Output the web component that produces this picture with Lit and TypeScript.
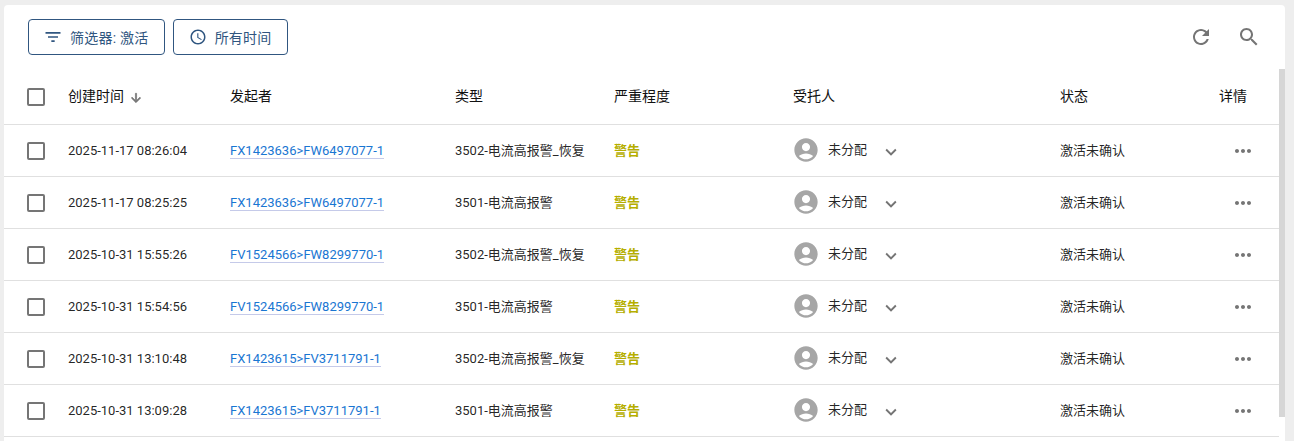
import { LitElement, html, css, svg } from "lit";
import { customElement } from "lit/decorators.js";

const rows = [
  ["2025-11-17 08:26:04", "FX1423636>FW6497077-1", "3502-电流高报警_恢复"],
  ["2025-11-17 08:25:25", "FX1423636>FW6497077-1", "3501-电流高报警"],
  ["2025-10-31 15:55:26", "FV1524566>FW8299770-1", "3502-电流高报警_恢复"],
  ["2025-10-31 15:54:56", "FV1524566>FW8299770-1", "3501-电流高报警"],
  ["2025-10-31 13:10:48", "FX1423615>FV3711791-1", "3502-电流高报警_恢复"],
  ["2025-10-31 13:09:28", "FX1423615>FV3711791-1", "3501-电流高报警"],
];

const icon = (size: number, body: unknown, cls = "") => html`<svg class=${cls} width=${size} height=${size} viewBox="0 0 24 24" fill="currentColor">${body}</svg>`;

@customElement("app-root")
export class AppRoot extends LitElement {
  static styles = css`
    :host { display: block; height: 441px; overflow: hidden; background: #eeeeee; font-family: Roboto, "Noto Sans CJK SC", sans-serif; color: rgba(0,0,0,.87); }
    .page { padding: 5px 9px 0 4px; }
    .card { background: #fff; border-radius: 4px 4px 0 0; height: 436px; overflow: hidden; }
    .toolbar { height: 64px; box-sizing: border-box; padding: 14px 24px 0 24px; display: flex; align-items: flex-start; gap: 8px; }
    .btn { height: 36px; box-sizing: border-box; border: 1px solid #305680; border-radius: 4px; display: flex; align-items: center; gap: 8px; padding: 0 15px; font-size: 14px; color: #305680; letter-spacing: .25px; background: #fff; }
    .btn svg { display: block; }
    .btn .filter { margin: 0 -1px; }
    .spacer { flex: 1; }
    .tools { display: flex; gap: 24px; color: #757575; padding-top: 6px; }
    .tools svg { display: block; }
    .body { display: flex; }
    .table { flex: 1; min-width: 0; }
    .rail { width: 6px; }
    .thumb { height: 348px; background: #d6d6d6; }
    .row { display: grid; grid-template-columns: 64px 162px 225px 159px 179px 267px 159px 1fr; align-items: center; border-bottom: 1px solid #e0e0e0; height: 52px; box-sizing: border-box; font-size: 13px; line-height: 20px; }
    .head { height: 56px; font-size: 14px; font-weight: 400; color: #111; }
    .label { margin-bottom: 1px; }
    .check { width: 18px; height: 18px; box-sizing: border-box; border: 2px solid #757575; border-radius: 2px; margin-left: 23px; }
    .sort { display: flex; align-items: center; gap: 5px; margin-bottom: 1px; }
    .sort svg { color: #757575; margin-top: 3px; display: block; stroke: currentColor; stroke-width: 1.2; }
    .link { color: #1976d2; justify-self: start; border-bottom: 1px solid #c5cae9; line-height: 15px; }
    .warn { color: #b5ae00; font-weight: 700; }
    .assignee { display: flex; align-items: center; margin: 0 0 2px -1px; }
    .avatar { color: #a6a6a6; display: block; margin-right: 8px; }
    .chev { color: #757575; margin: 5px 0 0 13px; display: block; }
    .more { color: #757575; margin-left: 12px; display: block; }
  `;

  render() {
    return html`<div class="page"><div class="card">
      <div class="toolbar">
        <div class="btn">${icon(20, svg`<path d="M10 18h4v-2h-4v2zM3 6v2h18V6H3zm3 7h12v-2H6v2z"/>`, "filter")}<span>筛选器: 激活</span></div>
        <div class="btn">${icon(18, svg`<path d="M11.99 2C6.47 2 2 6.48 2 12s4.47 10 9.99 10C17.52 22 22 17.52 22 12S17.52 2 11.99 2zM12 20c-4.42 0-8-3.58-8-8s3.58-8 8-8 8 3.58 8 8-3.58 8-8 8zm.5-13H11v6l5.25 3.15.75-1.23-4.5-2.67V7z"/>`)}<span>所有时间</span></div>
        <div class="spacer"></div>
        <div class="tools">
          ${icon(24, svg`<path d="M17.65 6.35C16.2 4.9 14.21 4 12 4c-4.42 0-7.99 3.58-7.99 8s3.57 8 7.99 8c3.73 0 6.84-2.55 7.73-6h-2.08c-.82 2.33-3.04 4-5.65 4-3.31 0-6-2.69-6-6s2.69-6 6-6c1.66 0 3.14.69 4.22 1.78L13 11h7V4l-2.35 2.35z"/>`)}
          ${icon(24, svg`<path d="M15.5 14h-.79l-.28-.27C15.41 12.59 16 11.11 16 9.5 16 5.91 13.09 3 9.5 3S3 5.91 3 9.5 5.91 16 9.5 16c1.61 0 3.09-.59 4.23-1.57l.27.28v.79l5 4.99L20.49 19l-4.99-5zm-6 0C7.01 14 5 11.99 5 9.5S7.01 5 9.5 5 14 7.01 14 9.5 11.99 14 9.5 14z"/>`)}
        </div>
      </div>
      <div class="body">
        <div class="table">
          <div class="row head">
            <div class="check"></div>
            <div class="sort"><span>创建时间</span>${icon(14, svg`<path d="M20 12l-1.41-1.41L13 16.17V4h-2v12.17l-5.58-5.59L4 12l8 8 8-8z"/>`)}</div>
            <div class="label">发起者</div><div class="label">类型</div><div class="label">严重程度</div><div class="label">受托人</div><div class="label">状态</div><div class="label">详情</div>
          </div>
          ${rows.map((r) => html`<div class="row">
            <div class="check"></div>
            <div>${r[0]}</div>
            <div class="link">${r[1]}</div>
            <div>${r[2]}</div>
            <div class="warn">警告</div>
            <div class="assignee">
              ${icon(28, svg`<path d="M12 2C6.48 2 2 6.48 2 12s4.48 10 10 10 10-4.48 10-10S17.52 2 12 2zm0 4c1.93 0 3.5 1.57 3.5 3.5S13.93 13 12 13s-3.5-1.57-3.5-3.5S10.07 6 12 6zm0 14c-2.03 0-4.43-.82-6.14-2.88C7.55 15.8 9.68 15 12 15s4.45.8 6.14 2.12C16.43 19.18 14.03 20 12 20z"/>`, "avatar")}
              <span>未分配</span>
              ${icon(22, svg`<path d="M7.41 8.59L12 13.17l4.59-4.58L18 10l-6 6-6-6 1.41-1.41z"/>`, "chev")}
            </div>
            <div>激活未确认</div>
            ${icon(24, svg`<path d="M6 10c-1.1 0-2 .9-2 2s.9 2 2 2 2-.9 2-2-.9-2-2-2zm12 0c-1.1 0-2 .9-2 2s.9 2 2 2 2-.9 2-2-.9-2-2-2zm-6 0c-1.1 0-2 .9-2 2s.9 2 2 2 2-.9 2-2-.9-2-2-2z"/>`, "more")}
          </div>`)}
        </div>
        <div class="rail"><div class="thumb"></div></div>
      </div>
    </div></div>`;
  }
}
